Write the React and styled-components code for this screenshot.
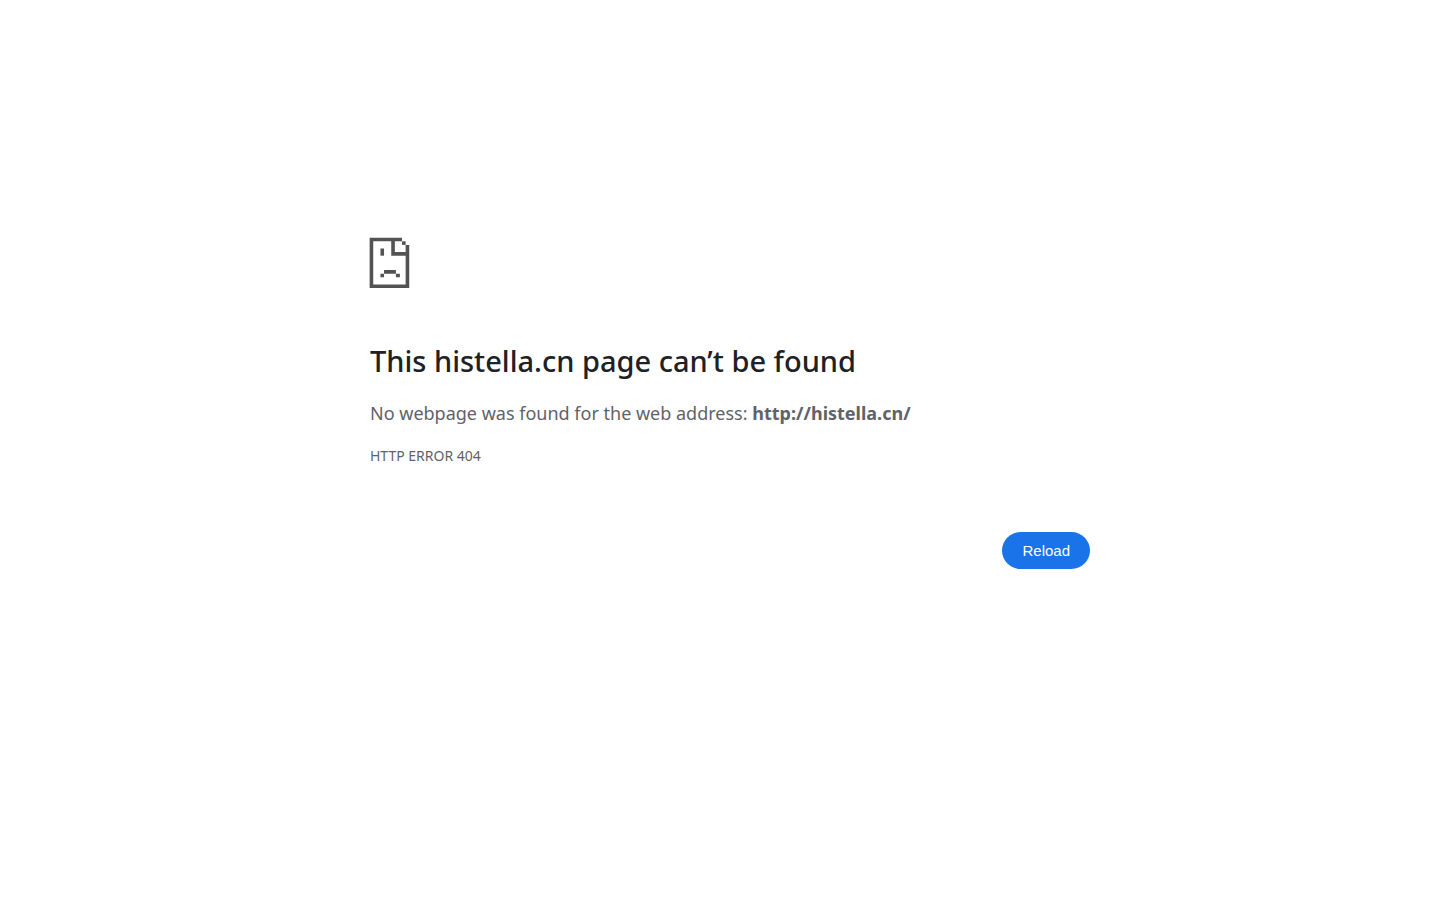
import styled, { createGlobalStyle } from "styled-components"

const GlobalStyle = createGlobalStyle`
    body {
        margin: 0;
        background-color: #ffffff;
        color: #5f6368;
        font-family: "Noto Sans", sans-serif;
        font-size: 18px;
        line-height: 28px;
    }
`

const Wrapper = styled.main`
    box-sizing: border-box;
    max-width: 740px;
    margin: 0 auto;
    padding: 226px 0 40px 20px;
`

const SadPage = styled.svg`
    display: block;
    width: 72px;
    height: 72px;
    margin-bottom: 45px;
    overflow: visible;
    fill: #535353;
`

const Title = styled.h1`
    margin: 0 0 20px;
    color: #202124;
    font-size: 29px;
    font-weight: 500;
    line-height: 36px;
`

const Message = styled.p`
    margin: 0;
`

const ErrorCode = styled.p`
    margin: 15px 0 0;
    font-size: 14px;
`

const Buttons = styled.div`
    display: flex;
    justify-content: flex-end;
    margin-top: 62px;
`

const ReloadButton = styled.button`
    height: 37px;
    padding: 0 20px;
    border: 0;
    border-radius: 20px;
    background-color: #1a73e8;
    color: #ffffff;
    font-family: "Liberation Sans", sans-serif;
    font-size: 15px;
    cursor: pointer;
`

export default function App() {
    return (
        <>
            <GlobalStyle />
            <Wrapper>
                <SadPage viewBox="0.1 -3.25 20 20" aria-hidden="true">
                    <path fillRule="evenodd" d="M0 0H9V1H7V4H10V2H11V14H0ZM1 1V13H10V5H6V1Z" />
                    <path d="M9 1H10V2H9Z" />
                    <path d="M3 3H4V5H3Z" />
                    <path d="M4 9H7.3V10H8.4V11H7.3V10H4V11H3V10H4Z" />
                </SadPage>
                <Title>This histella.cn page can’t be found</Title>
                <Message>No webpage was found for the web address: <strong>http://histella.cn/</strong></Message>
                <ErrorCode>HTTP ERROR 404</ErrorCode>
                <Buttons>
                    <ReloadButton type="button" onClick={() => window.location.reload()}>Reload</ReloadButton>
                </Buttons>
            </Wrapper>
        </>
    )
}
